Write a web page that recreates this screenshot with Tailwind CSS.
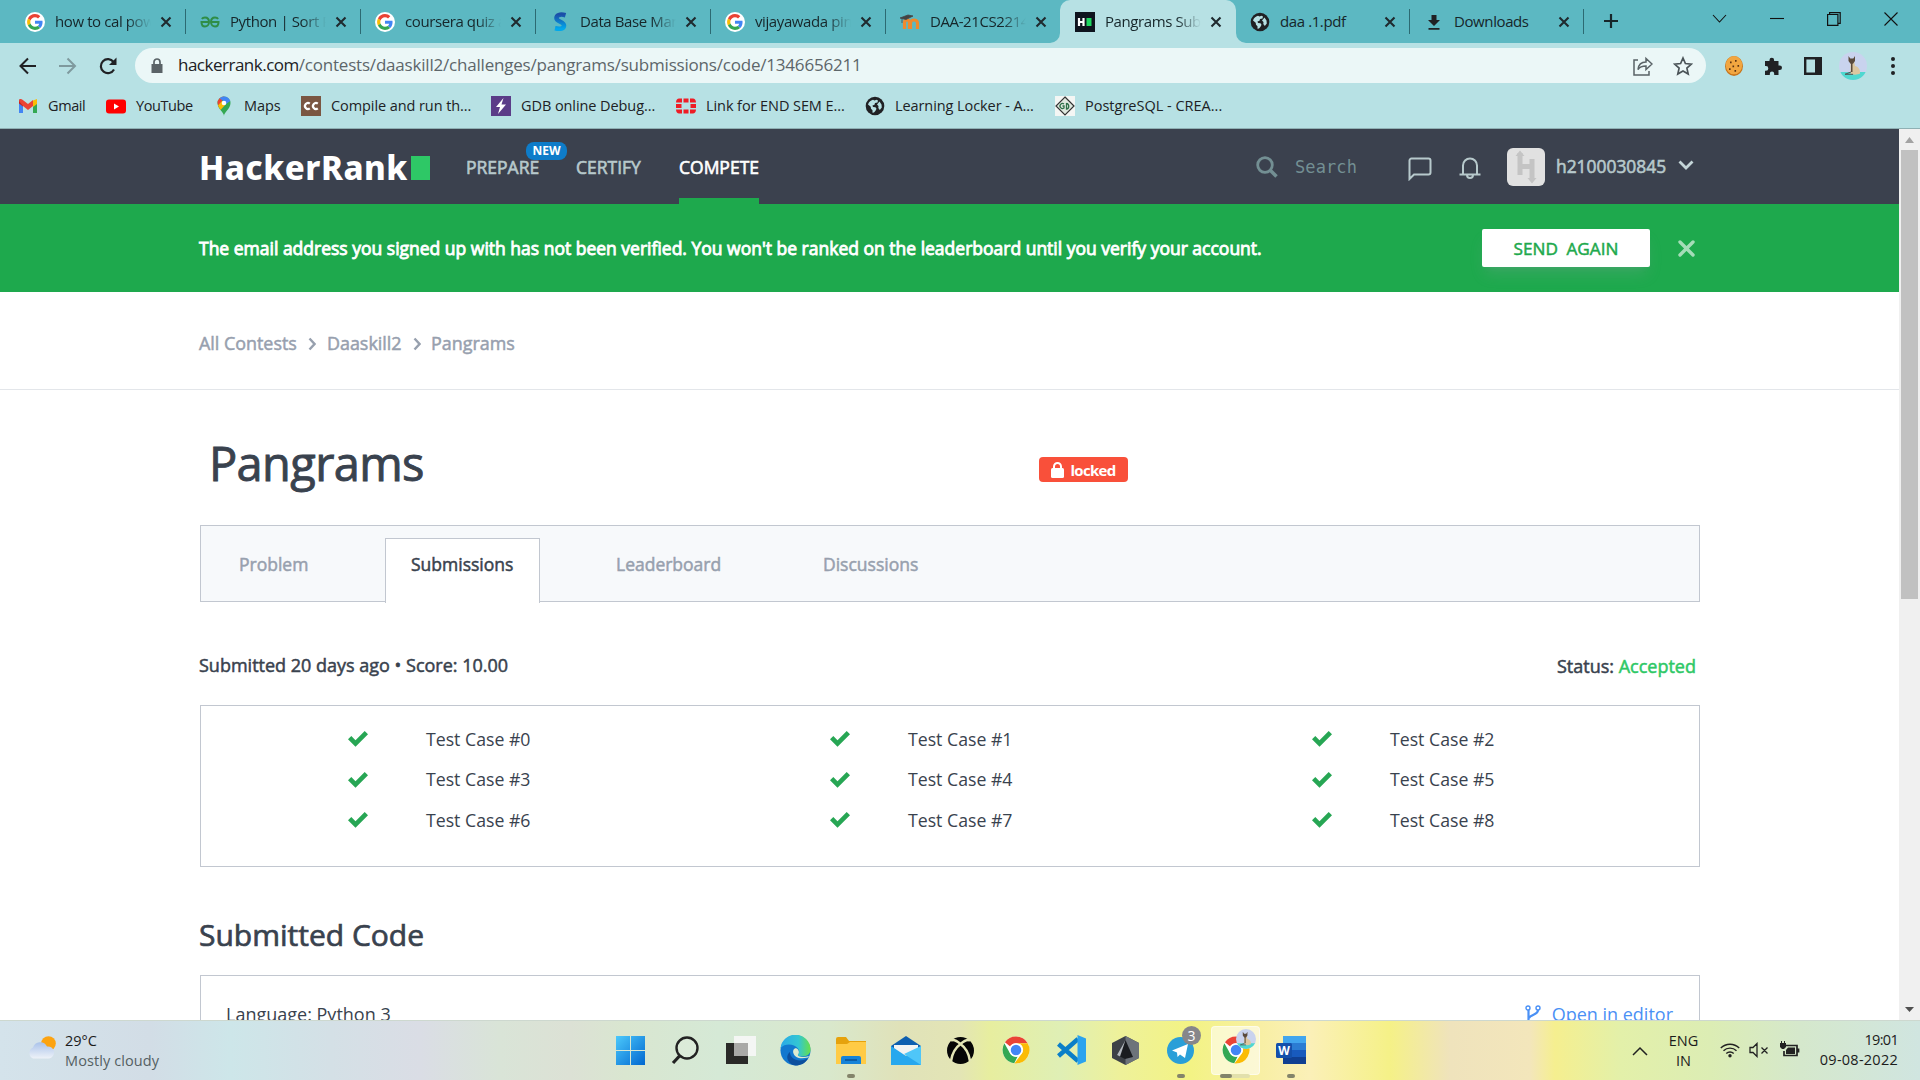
<!DOCTYPE html>
<html lang="en">
<head>
<meta charset="utf-8">
<title>Pangrams Submissions</title>
<script src="https://cdn.jsdelivr.net/npm/@tailwindcss/browser@4"></script>
</head>
<body class="w-[1920px] h-[1080px] overflow-hidden bg-white font-['Open_Sans',sans-serif] text-[#39424e]">
<svg class="absolute size-0">
  <symbol id="google" viewBox="0 0 48 48"><circle cx="24" cy="24" r="24" fill="#fff"/><g transform="translate(5 5) scale(.79)"><path fill="#EA4335" d="M24 9.500c3.540 0 6.710 1.220 9.210 3.600l6.850-6.850C35.900 2.380 30.470 0 24 0 14.620 0 6.510 5.380 2.560 13.220l7.980 6.190C12.430 13.720 17.740 9.500 24 9.500z"/><path fill="#4285F4" d="M46.980 24.550c0-1.570-.15-3.090-.38-4.550H24v9.020h12.940c-.58 2.960-2.260 5.480-4.780 7.180l7.730 6c4.510-4.180 7.090-10.360 7.090-17.650z"/><path fill="#FBBC05" d="M10.530 28.590c-.48-1.450-.76-2.990-.76-4.590s.27-3.140.76-4.590l-7.980-6.190C.92 16.460 0 20.120 0 24s.92 7.540 2.560 10.780l7.970-6.190z"/><path fill="#34A853" d="M24 48c6.480 0 11.930-2.130 15.890-5.810l-7.730-6c-2.150 1.450-4.920 2.300-8.160 2.300-6.260 0-11.570-4.220-13.470-9.910l-7.980 6.190C6.510 42.620 14.620 48 24 48z"/></g></symbol>
  <symbol id="x" viewBox="0 0 12 12"><path d="M1.500 1.500l9 9M10.500 1.500l-9 9" stroke="#1f2a2e" stroke-width="2.100" fill="none"/></symbol>
  <symbol id="globe" viewBox="0 0 20 20"><circle cx="10" cy="10" r="9.300" fill="#202124"/><path d="M3 8.500c.8-2.500 2.500-4 5-4.800l1.500.8 2-.7 1.500.7-.5 2-2.500.5-.5 1.800-2 .7.500 1.500 2.500.2 1 1.500-1 2-1.500 1.800-1.500.2v-2.500l-1.500-1.500-.3-2zM14.500 5.500l2 3 .3 3-2 2.500-1.500-2 .2-2-1.500-1.500z" fill="#b7e1e4"/></symbol>
  <symbol id="chrome" viewBox="0 0 48 48"><circle cx="24" cy="24" r="23" fill="#fff"/><path d="M24 1a23 23 0 0 1 20 11.500H24A11.500 11.500 0 0 0 14 18.200L5 10.900A23 23 0 0 1 24 1z" fill="#ea4335"/><path d="M4.100 12.500L14 29.800A11.500 11.500 0 0 0 24 35.500l2.800-.3L21 46.800A23 23 0 0 1 4.100 12.500z" fill="#34a853"/><path d="M44 12.500A23 23 0 0 1 24 47h-2.700L34 29.800a11.500 11.500 0 0 0-2-15.600l-8-1.700z" fill="#fbbc05"/><circle cx="24" cy="24" r="11.500" fill="#fff"/><circle cx="24" cy="24" r="9" fill="#4285f4"/></symbol>
  <symbol id="check" viewBox="0 0 20 16"><path d="M0 8.300L3.300 5 7.500 9.200 16.700 0 20 3.300 7.500 15.800z" fill="#27a654"/></symbol>
  <symbol id="chev" viewBox="0 0 8 14"><path d="M1.500 1.500L6.500 7l-5 5.500" stroke="#97a0ae" stroke-width="2.400" fill="none"/></symbol>
  <clipPath id="dc"><circle cx="14" cy="14" r="14"/></clipPath>
  <symbol id="dog" viewBox="0 0 28 28"><g clip-path="url(#dc)"><rect width="28" height="28" fill="#c9d3ee"/><path d="M0 20l28 0v8H0z" fill="#4fd8d0"/><path d="M11.500 9c1-1 3-1 3.500 0l1 5c3 .5 5.500 3.500 5 7.500-2 1.500-8 1.500-9.500 0z" fill="#dcc7a0"/><path d="M9.500 4l1.800 2.500h3L16 4v5l-2 2.800h-2.500l-2-2.800zM12 11h1.500v9H12z" fill="#5a4a3c"/><path d="M12 20l-6 2.300h8" stroke="#555" stroke-width="1" fill="none"/></g></symbol>
</svg>

<div class="flex flex-col w-[1920px] h-[1080px]">
  <!-- Tab strip -->
  <div class="flex h-[43px] bg-[#5cb8c2] pl-[11px] text-[15px] tracking-[-0.4px] text-[#16262a] shrink-0">
    <div class="flex items-center w-[175px] pl-[14px] relative"><svg class="size-5"><use href="#google"/></svg><div class="w-[96px] ml-[10px] -mt-px overflow-hidden whitespace-nowrap [mask-image:linear-gradient(to_right,#000_75%,transparent)]"><span>how to cal power</span></div><svg class="size-3 ml-[9px]"><use href="#x"/></svg><i class="absolute right-0 top-[9px] w-px h-[25px] bg-[#2c6a72]"></i></div>
    <div class="flex items-center w-[175px] pl-[14px] relative"><svg class="w-5 h-3" viewBox="0 0 20 12"><path d="M9 6H1.500C1.500 9 3 10.500 5 10.500S9 9 9 6 7.500 1.500 5 1.500 2.500 2 2 3M11 6h7.500c0 3-1.500 4.500-3.500 4.500S11 9 11 6s1.500-4.500 4-4.500 2.500.5 3 1.500" stroke="#2f8d46" stroke-width="2" fill="none"/></svg><div class="w-[96px] ml-[10px] -mt-px overflow-hidden whitespace-nowrap [mask-image:linear-gradient(to_right,#000_75%,transparent)]"><span>Python | Sort Python</span></div><svg class="size-3 ml-[9px]"><use href="#x"/></svg><i class="absolute right-0 top-[9px] w-px h-[25px] bg-[#2c6a72]"></i></div>
    <div class="flex items-center w-[175px] pl-[14px] relative"><svg class="size-5"><use href="#google"/></svg><div class="w-[96px] ml-[10px] -mt-px overflow-hidden whitespace-nowrap [mask-image:linear-gradient(to_right,#000_75%,transparent)]"><span>coursera quiz answers</span></div><svg class="size-3 ml-[9px]"><use href="#x"/></svg><i class="absolute right-0 top-[9px] w-px h-[25px] bg-[#2c6a72]"></i></div>
    <div class="flex items-center w-[175px] pl-[14px] relative"><svg class="size-5" viewBox="0 0 20 20"><defs><linearGradient id="sg" x2="0" y2="1"><stop stop-color="#1b4fa8"/><stop offset="1" stop-color="#00a8ec"/></linearGradient></defs><path d="M15.500 3.200C9.500 1.500 6.500 3.500 6.500 6c0 4 7.500 3.500 7.500 7.500 0 3-3.500 4-9 2.800" stroke="url(#sg)" stroke-width="4.600" fill="none"/></svg><div class="w-[96px] ml-[10px] -mt-px overflow-hidden whitespace-nowrap [mask-image:linear-gradient(to_right,#000_75%,transparent)]"><span>Data Base Management</span></div><svg class="size-3 ml-[9px]"><use href="#x"/></svg><i class="absolute right-0 top-[9px] w-px h-[25px] bg-[#2c6a72]"></i></div>
    <div class="flex items-center w-[175px] pl-[14px] relative"><svg class="size-5"><use href="#google"/></svg><div class="w-[96px] ml-[10px] -mt-px overflow-hidden whitespace-nowrap [mask-image:linear-gradient(to_right,#000_75%,transparent)]"><span>vijayawada pincode</span></div><svg class="size-3 ml-[9px]"><use href="#x"/></svg><i class="absolute right-0 top-[9px] w-px h-[25px] bg-[#2c6a72]"></i></div>
    <div class="flex items-center w-[174px] pl-[14px]"><svg class="size-5" viewBox="0 0 20 20"><path d="M4.500 17v-6c0-4 5-4 5 0v6M10.500 17v-6c0-4 7-4 7 0v6" stroke="#f08a2c" stroke-width="3.200" fill="none"/><path d="M0 6l8-3 5 1-7 3.500zM2 6v5" fill="#444" stroke="#444" stroke-width=".8"/></svg><div class="w-[96px] ml-[10px] -mt-px overflow-hidden whitespace-nowrap [mask-image:linear-gradient(to_right,#000_75%,transparent)]"><span>DAA-21CS2214</span></div><svg class="size-3 ml-[9px]"><use href="#x"/></svg></div>
    <div class="flex items-center w-[176px] pl-[15px] bg-[#b7e1e4] rounded-t-[10px] relative"><svg class="absolute -left-[10px] bottom-0 size-[10px]" viewBox="0 0 10 10"><path d="M10 0v10H0A10 10 0 0 0 10 0z" fill="#b7e1e4"/></svg><svg class="absolute -right-[10px] bottom-0 size-[10px]" viewBox="0 0 10 10"><path d="M0 0v10h10A10 10 0 0 1 0 0z" fill="#b7e1e4"/></svg>
      <svg class="size-5" viewBox="0 0 20 20"><path fill="#0e141e" d="M0 0h20v20H0z"/><path d="M4 6v8M8.500 6v8M4 10h4.500" stroke="#fff" stroke-width="2.200"/><path fill="#1ed760" d="M11.500 6h5v8h-5z"/></svg><div class="w-[96px] ml-[10px] -mt-px overflow-hidden whitespace-nowrap [mask-image:linear-gradient(to_right,#000_75%,transparent)]"><span>Pangrams Submissions</span></div><svg class="size-3 ml-[9px]"><use href="#x"/></svg></div>
    <div class="flex items-center w-[174px] pl-[14px] relative"><svg class="size-5"><use href="#globe"/></svg><div class="w-[96px] ml-[10px] -mt-px"><span>daa .1.pdf</span></div><svg class="size-3 ml-[8px]"><use href="#x"/></svg><i class="absolute right-0 top-[9px] w-px h-[25px] bg-[#2c6a72]"></i></div>
    <div class="flex items-center w-[174px] pl-[14px] relative"><svg class="size-5" viewBox="0 0 20 20"><path d="M7.500 3h5v5h3.500l-6 6-6-6h3.500zM4.500 16h11v1.800h-11z" fill="#202124"/></svg><div class="w-[96px] ml-[10px] -mt-px"><span>Downloads</span></div><svg class="size-3 ml-[8px]"><use href="#x"/></svg><i class="absolute right-0 top-[9px] w-px h-[25px] bg-[#2c6a72]"></i></div>
    <svg class="w-4 h-4 mt-[13px] ml-[19px]" viewBox="0 0 16 16"><path d="M8 1v14M1 8h14" stroke="#16262a" stroke-width="2.200"/></svg>
    <div class="flex ml-auto pr-[22px] pt-[12px] gap-[43px]">
      <svg class="w-[15px] h-[14px]" viewBox="0 0 15 14"><path d="M1 3l6.500 7L14 3" stroke="#111" stroke-width="1.100" fill="none"/></svg>
      <svg class="w-[14px] h-[14px]" viewBox="0 0 14 14"><path d="M0 6.500h14" stroke="#111" stroke-width="1.100"/></svg>
      <svg class="w-[14px] h-[14px]" viewBox="0 0 14 14"><path d="M.6 2.500h10.300v10.800H.6zM2.600 2.500V.6h10.600v10.800h-2" stroke="#111" stroke-width="1.200" fill="none"/></svg>
      <svg class="w-[14px] h-[14px]" viewBox="0 0 14 14"><path d="M.5 .5l13 13M13.500 .5l-13 13" stroke="#111" stroke-width="1.100"/></svg>
    </div>
  </div>

  <!-- Address bar -->
  <div class="flex h-[45px] items-center bg-[#b7e1e4] shrink-0 pl-[18px] pr-[25px] pb-px pt-px">
    <svg class="w-5 h-5" viewBox="0 0 20 20"><path d="M18 10H3M10 2.500L2.500 10l7.500 7.500" stroke="#202124" stroke-width="2" fill="none"/></svg>
    <svg class="w-5 h-5 ml-[20px]" viewBox="0 0 20 20"><path d="M1 10h15M9.500 2.500L17 10l-7.500 7.500" stroke="#7f9a9e" stroke-width="2" fill="none"/></svg>
    <svg class="w-5 h-5 ml-[20px]" viewBox="0 0 20 20"><path d="M16 13.500a7 7 0 1 1-.5-7.500" stroke="#202124" stroke-width="2.200" fill="none"/><path d="M18.500 1.500v7.500H11z" fill="#202124"/></svg>
    <div class="flex flex-1 ml-[17px] h-[35px] rounded-full bg-[#ebf7f7] items-center pl-[16px] pr-[13px]">
      <svg class="w-3 h-4" viewBox="0 0 12 16"><path d="M.5 6h11v9H.5z" fill="#5a6367"/><path d="M3 7V4a3 3 0 0 1 6 0v3" stroke="#5a6367" stroke-width="1.700" fill="none"/></svg>
      <div class="ml-[15px] -mt-px text-[17px] whitespace-nowrap text-[#5d666a]"><span class="text-[#202124] tracking-[-0.5px]">hackerrank.com</span><span class="tracking-[-0.2px]">/contests/daaskill2/challenges/pangrams/submissions/code/1346656211</span></div>
      <svg class="w-5 h-5 ml-auto" viewBox="0 0 20 20"><path d="M5 4H1v15h15v-4" stroke="#5a6367" stroke-width="1.500" fill="none"/><path d="M5 13.500c.5-5 3-7.500 8-7.500V2.500l6 5.500-6 5.500V10c-4 0-6.500 1-8 3.500z" stroke="#5a6367" stroke-width="1.500" fill="none"/></svg>
      <svg class="w-5 h-5 ml-[20px]" viewBox="0 0 20 20"><path d="M10 2l2.400 5.500 6 .6-4.500 4 1.300 5.900L10 15l-5.200 3 1.300-5.900-4.500-4 6-.6z" stroke="#4b5458" stroke-width="1.700" fill="none"/></svg>
    </div>
    <svg class="w-[18px] h-[20px] ml-[19px]" viewBox="0 0 18 18" preserveAspectRatio="none"><circle cx="9" cy="9" r="9" fill="#c8741a"/><circle cx="9" cy="8.300" r="8.200" fill="#f2a640"/><path d="M5 5h1.600v1.600H5zM10 3.500h1.600v1.600H10zM12.500 8h1.600v1.600h-1.600zM7.500 8.500h1.600v1.600H7.500zM4 11h1.600v1.600H4zM9.500 12.500h1.600v1.600H9.500z" fill="#5b3210"/></svg>
    <svg class="w-5 h-5 ml-[20px]" viewBox="0 0 20 20"><path d="M2 5h4.500V4a2.300 2.300 0 0 1 4.600 0v1h4.400v4.500h1.200a2.300 2.300 0 0 1 0 4.600h-1.200V19h-4.300v-1.300a2 2 0 0 0-4.400 0V19H2v-4.300h1a2.300 2.300 0 0 0 0-4.600H2z" fill="#202124"/></svg>
    <svg class="w-[18px] h-[18px] ml-[21px]" viewBox="0 0 18 18"><path d="M1.200 1.200h15.600v15.600H1.200z" fill="none" stroke="#202124" stroke-width="2.400"/><path d="M11 1h6v16h-6z" fill="#202124"/></svg>
    <svg class="w-7 h-7 ml-[17px]"><use href="#dog"/></svg>
    <svg class="w-1 h-5 ml-[24px]" viewBox="0 0 4 20"><circle cx="2" cy="3" r="2" fill="#202124"/><circle cx="2" cy="10" r="2" fill="#202124"/><circle cx="2" cy="17" r="2" fill="#202124"/></svg>
  </div>

  <!-- Bookmarks -->
  <div class="flex h-[41px] pb-[5px] items-center bg-[#b7e1e4] border-b border-[#8fb0b4] shrink-0 pl-[18px] text-[14.500px] tracking-[-0.08px] text-[#202124] whitespace-nowrap">
    <div class="flex items-center gap-[10px] w-[88px]"><svg class="size-5 shrink-0" viewBox="0 0 20 20"><path d="M1 4.500v12.500h4V9z" fill="#4285f4"/><path d="M19 4.500v12.500h-4V9z" fill="#34a853"/><path d="M15 4.500L19 3v5l-4 3z" fill="#fbbc04"/><path d="M1 3.500L5 4.500v6L1 7.500z" fill="#c5221f"/><path d="M1 5C1 3 3 2.500 4.500 3.700L10 8l5-4v6l-5 4-5-4z" fill="#ea4335"/></svg><span class="tracking-[-0.4px]">Gmail</span></div>
    <div class="flex items-center gap-[10px] w-[108px]"><svg class="size-5 shrink-0" viewBox="0 0 20 20"><rect y="3.500" width="20" height="14" rx="3" fill="#f00"/><path d="M8 7.500v6l5-3z" fill="#fff"/></svg><span class="tracking-[-0.4px]">YouTube</span></div>
    <div class="flex items-center gap-[10px] w-[87px]"><svg class="size-5 shrink-0" viewBox="0 0 20 20"><path d="M10 20c0-4-6.500-7-6.500-13a6.500 6.500 0 0 1 13 0c0 6-6.500 9-6.500 13z" fill="#34a853"/><path d="M3.500 7A6.500 6.500 0 0 1 10 .5L5 11z" fill="#ea4335"/><path d="M10 .5c3 0 5.500 2 6.300 4.500L12 8 8 4 5.500 2.500A7 7 0 0 1 10 .5z" fill="#4285f4"/><path d="M4 9.500L8 5l4 3-5.500 6z" fill="#fbbc04"/><circle cx="10" cy="7" r="2.300" fill="#fff"/></svg><span>Maps</span></div>
    <div class="flex items-center gap-[10px] w-[190px]"><svg class="size-5 shrink-0" viewBox="0 0 20 20"><path d="M0 0h20v20H0z" fill="#7a5642"/><path d="M8.800 7.600a3 3 0 1 0 0 4.800M16.800 7.600a3 3 0 1 0 0 4.800" stroke="#fff" stroke-width="2.200" fill="none"/></svg><span>Compile and run th...</span></div>
    <div class="flex items-center gap-[10px] w-[185px]"><svg class="size-5 shrink-0" viewBox="0 0 20 20"><path d="M0 0h20v20H0z" fill="#5b3c88"/><path d="M12.500 2L5 11h4l-2 7 8-9.500h-4.500z" fill="#fff"/></svg><span>GDB online Debug...</span></div>
    <div class="flex items-center gap-[10px] w-[189px]"><svg class="size-5 shrink-0" viewBox="0 0 20 20"><path d="M7.500 2.500h5v4h-5zM7.500 13.500h5v4h-5zM0 8h5.500v4H0zM14.500 8H20v4h-5.500zM3 2.500h3v4H0C0 4 1.500 2.500 3 2.500zM17 2.500h-3v4h6c0-2.500-1.500-4-3-4zM3 17.500h3v-4H0c0 2.500 1.500 4 3 4zM17 17.500h-3v-4h6c0 2.500-1.500 4-3 4z" fill="#ee1c25"/></svg><span>Link for END SEM E...</span></div>
    <div class="flex items-center gap-[10px] w-[190px]"><svg class="size-5 shrink-0"><use href="#globe"/></svg><span>Learning Locker - A...</span></div>
    <div class="flex items-center gap-[10px]"><svg class="size-5 shrink-0" viewBox="0 0 20 20"><path d="M0 0h20v20H0z" fill="#f4f6f4"/><path d="M10 1l9 9-9 9-9-9z" fill="#dfe8df" stroke="#333" stroke-width="1.200"/><path d="M9 8a2.500 2.500 0 1 0 0 4V10H7.500M11.500 7v6c3 0 3-5.500 0-5.500" stroke="#2f7048" stroke-width="1.300" fill="none"/></svg><span class="tracking-normal">PostgreSQL - CREA...</span></div>
  </div>

  <!-- Viewport -->
  <div class="flex h-[891px] shrink-0 overflow-hidden">
    <div class="w-[1899px] h-full overflow-hidden">
      <!-- Site header -->
      <div class="flex h-[75px] bg-[#3b414e] pl-[199px] pr-[205px]">
        <div class="flex items-center w-[267px] pt-[3px]"><span class="font-['Noto_Sans',sans-serif] font-extrabold text-[33px] tracking-[0.5px] leading-none text-white whitespace-nowrap -mt-[2px]">HackerRank</span><i class="w-[19px] h-6 ml-[3px] bg-[#2ec866]"></i></div>
        <div class="flex gap-[36px] text-[17.500px] [-webkit-text-stroke:0.6px] text-[#b7c9cc]">
          <div class="relative h-full pt-[26px] leading-6 w-[74px] whitespace-nowrap"><span>PREPARE</span><b class="absolute left-[60px] top-[13px] w-[41px] h-[18px] rounded-lg bg-[#0e7cc9] text-white text-[12px] leading-[18px] text-center [-webkit-text-stroke:0px]">NEW</b></div>
          <div class="h-full pt-[26px] leading-6 w-[67px]"><span>CERTIFY</span></div>
          <div class="h-full pt-[26px] leading-6 w-[80px] text-white border-b-[6px] border-[#1ea94d] whitespace-nowrap"><span>COMPETE</span></div>
        </div>
        <div class="flex ml-auto items-center">
          <svg class="w-[22px] h-[22px]" viewBox="0 0 22 22"><circle cx="9" cy="9" r="7.300" stroke="#738f93" stroke-width="2.800" fill="none"/><path d="M14 14l6.500 6.500" stroke="#738f93" stroke-width="3.600"/></svg>
          <span class="ml-[17px] w-[63px] pt-0.5 font-['DejaVu_Sans_Mono',monospace] text-[17px] tracking-[0.1px] text-[#738f93]">Search</span>
          <svg class="w-6 h-6 ml-[50px] mt-[4px]" viewBox="0 0 24 24"><path d="M1.500 22V3.500A2 2 0 0 1 3.500 1.500h17a2 2 0 0 1 2 2v12a2 2 0 0 1-2 2H6z" stroke="#b7c9cc" stroke-width="2" fill="none"/></svg>
          <svg class="w-6 h-6 ml-[26px] mt-[3px]" viewBox="0 0 24 24"><path d="M1.500 18.500h21M5 18V9.500a7 7 0 0 1 14 0V18M9 19a3 3 0 0 0 6 0" stroke="#b7c9cc" stroke-width="2" fill="none"/></svg>
          <svg class="w-[38px] h-[38px] ml-[25px]" viewBox="0 0 38 38"><rect width="38" height="38" rx="6" fill="#e1e1e1"/><path d="M13 5v22M13 18.500h13M25 11v21" stroke="#c4c4c4" stroke-width="5"/><path d="M8.500 8L13 2.500 17.500 8zM20.500 30h9L25 35.500z" fill="#c4c4c4"/></svg>
          <span class="ml-[11px] w-[110px] -mt-px [-webkit-text-stroke:0.6px] text-[17.400px] text-[#b7c9cc]">h2100030845</span>
          <svg class="w-4 h-[10px] ml-[12px] -mt-1" viewBox="0 0 16 10"><path d="M1.500 1.500L8 8l6.500-6.500" stroke="#c5d6d9" stroke-width="2.800" fill="none"/></svg>
        </div>
      </div>
      <!-- Verification banner -->
      <div class="flex items-center h-[88px] bg-[#1ea94d] pl-[199px] pr-[204px]">
        <span class="[-webkit-text-stroke:0.85px] text-[17.500px] text-white whitespace-nowrap pt-px">The email address you signed up with has not been verified. You won't be ranked on the leaderboard until you verify your account.</span>
        <div class="flex items-center justify-center ml-auto w-[168px] h-[38px] rounded-[2px] bg-white text-[#1ea94d] [-webkit-text-stroke:0.5px] text-[17.200px] [word-spacing:4px] pt-0.5 shadow-lg shadow-gray-400/20"><span>SEND AGAIN</span></div>
        <svg class="w-[17px] h-[17px] ml-[28px]" viewBox="0 0 17 17"><path d="M2 2l13 13M15 2L2 15" stroke="#a5ddb8" stroke-width="3.400" stroke-linecap="round"/></svg>
      </div>
      <!-- Breadcrumb -->
      <div class="flex items-center h-[98px] border-b border-[#e3e6ea] pl-[199px] pt-[6px] text-[#97a0ae] [-webkit-text-stroke:0.5px] text-[17.900px]">
        <span class="w-[98px] whitespace-nowrap">All Contests</span><svg class="w-2 h-3.5 mx-[11px]"><use href="#chev"/></svg><span class="w-[75px]">Daaskill2</span><svg class="w-2 h-3.5 ml-[11px] mr-[10px]"><use href="#chev"/></svg><span>Pangrams</span>
      </div>
      <!-- Content -->
      <div class="pl-[200px] w-[1700px]">
        <div class="flex h-[135px]">
          <h1 class="ml-[9px] mt-[41px] w-[830px] text-[47px] tracking-[-0.65px] leading-[64px] [-webkit-text-stroke:0.9px]">Pangrams</h1>
          <div class="flex items-center justify-center gap-[6px] w-[89px] h-[25px] mt-[67px] pt-px rounded bg-[#f9503a] text-white text-[15px] tracking-[-0.7px] font-bold"><svg class="w-[13px] h-4" viewBox="0 0 13 16"><rect y="6" width="13" height="10" rx="1.500" fill="#fff"/><path d="M3 7V4.500a3.500 3.500 0 0 1 7 0V7" stroke="#fff" stroke-width="2" fill="none"/></svg><span>locked</span></div>
        </div>
        <div class="flex h-[77px] w-[1500px] border border-[#c2c7d0] bg-[#f7f9fb] text-[17.500px] [-webkit-text-stroke:0.5px] text-[#97a0ae]">
          <div class="w-[184px] pl-[38px] pt-[26px] leading-6"><span>Problem</span></div>
          <div class="w-[155px] h-[65px] mt-[12px] bg-white border border-b-0 border-[#c2c7d0] text-[#39424e] pl-[25px] pt-[13px] leading-6"><span>Submissions</span></div>
          <div class="w-[207px] pl-[76px] pt-[26px] leading-6"><span>Leaderboard</span></div>
          <div class="pl-[76px] pt-[26px] leading-6"><span>Discussions</span></div>
        </div>
        <div class="flex justify-between items-center h-[103px] w-[1500px] pr-[4px] pt-[24px] text-[18px] [-webkit-text-stroke:0.5px]">
          <span class="-ml-px">Submitted 20 days ago • Score: 10.00</span>
          <span class="mt-[2px]">Status: <span class="text-[#2ec866]">Accepted</span></span>
        </div>
        <div class="grid grid-cols-[482px_482px_auto] auto-rows-[40.500px] content-start h-[162px] w-[1500px] border border-[#c2c7d0] pl-[147px] pt-[13px] text-[17.700px]">
          <div class="flex items-center gap-[58px]"><svg class="w-5 h-4"><use href="#check"/></svg><span>Test Case #0</span></div>
          <div class="flex items-center gap-[58px]"><svg class="w-5 h-4"><use href="#check"/></svg><span>Test Case #1</span></div>
          <div class="flex items-center gap-[58px]"><svg class="w-5 h-4"><use href="#check"/></svg><span>Test Case #2</span></div>
          <div class="flex items-center gap-[58px]"><svg class="w-5 h-4"><use href="#check"/></svg><span>Test Case #3</span></div>
          <div class="flex items-center gap-[58px]"><svg class="w-5 h-4"><use href="#check"/></svg><span>Test Case #4</span></div>
          <div class="flex items-center gap-[58px]"><svg class="w-5 h-4"><use href="#check"/></svg><span>Test Case #5</span></div>
          <div class="flex items-center gap-[58px]"><svg class="w-5 h-4"><use href="#check"/></svg><span>Test Case #6</span></div>
          <div class="flex items-center gap-[58px]"><svg class="w-5 h-4"><use href="#check"/></svg><span>Test Case #7</span></div>
          <div class="flex items-center gap-[58px]"><svg class="w-5 h-4"><use href="#check"/></svg><span>Test Case #8</span></div>
        </div>
        <h2 class="h-[108px] pt-[47px] leading-[42px] text-[30px] [-webkit-text-stroke:0.7px] -ml-px">Submitted Code</h2>
        <div class="flex justify-between w-[1500px] h-[120px] border border-[#c2c7d0] pl-[25px] pr-[26px] pt-[25px] text-[18px]">
          <span class="h-6">Language: Python 3</span>
          <div class="flex gap-[11px] h-6 text-[#4a90f5]"><svg class="w-4 h-5 mt-[4px]" viewBox="0 0 16 20"><circle cx="3" cy="3" r="2" stroke="#4a90f5" stroke-width="1.400" fill="none"/><circle cx="13" cy="3" r="2" stroke="#4a90f5" stroke-width="1.400" fill="none"/><path d="M3.500 5v12M13 5c0 5-7 4-9 8" stroke="#4a90f5" stroke-width="2.200" fill="none"/></svg><span>Open in editor</span></div>
        </div>
      </div>
    </div>
    <!-- Scrollbar -->
    <div class="flex flex-col items-center w-[21px] h-full bg-[#f0f0f0]">
      <svg class="w-[9px] h-[6px] mt-[8px]" viewBox="0 0 9 6"><path d="M4.500 0L9 6H0z" fill="#a3a3a3"/></svg>
      <div class="w-[17px] h-[449px] mt-[7px] bg-[#c1c1c1]"></div>
      <svg class="w-[9px] h-[6px] mt-auto mb-[7px]" viewBox="0 0 9 6"><path d="M4.500 5L9 0H0z" fill="#505050"/></svg>
    </div>
  </div>

  <!-- Taskbar -->
  <div class="relative flex h-[60px] shrink-0 border-t border-[#cdd8cf] bg-[linear-gradient(90deg,#d4e3eb_0px,#d2dde6_150px,#cde6e9_230px,#d4e0e6_330px,#dadde5_420px,#d9e4d7_500px,#dce1d5_570px,#d9e6d0_625px,#d5e9d6_720px,#d9e8cc_830px,#e0e2b9_900px,#e3e5b5_960px,#e7ee9f_990px,#dfefb5_1060px,#eef19a_1120px,#f3f384_1190px,#f8efa4_1260px,#fbf0b8_1310px,#f5f187_1390px,#efe3bc_1450px,#f3e6bb_1530px,#f5ef8f_1555px,#e3f0a9_1620px,#dcedb4_1710px,#d5e8cc_1800px,#d0e5e0_1920px)] text-[#1c1c1c]">
    <svg class="w-[30px] h-6 mt-[15px] ml-[27px]" viewBox="0 0 30 24"><defs><linearGradient id="cl" x2="0" y2="1"><stop stop-color="#a9c2ea"/><stop offset="1" stop-color="#eef2f8"/></linearGradient></defs><circle cx="21.500" cy="7.500" r="7.300" fill="#fca311"/><path d="M6 22.500a6 6 0 0 1 0-11 7.500 7.500 0 0 1 14-1 6 6 0 0 1 2 12z" fill="url(#cl)"/></svg>
    <div class="flex flex-col ml-[8px] pt-[10px] text-[14.500px] leading-[20px] w-[110px] whitespace-nowrap"><span>29°C</span><span class="text-[#555f63] tracking-[0.1px]">Mostly cloudy</span></div>
    <div class="flex ml-[428px] pt-[1px]">
      <div class="flex w-[55px] h-[56px] items-center justify-center"><svg class="w-[29px] h-[29px]" viewBox="0 0 29 29"><defs><linearGradient id="wn" x2="1" y2="1"><stop stop-color="#4cc9fb"/><stop offset="1" stop-color="#0067d0"/></linearGradient></defs><path d="M0 0h14v14H0zM15 0h14v14H15zM0 15h14v14H0zM15 15h14v14H15z" fill="url(#wn)"/></svg></div>
      <div class="flex w-[55px] h-[56px] items-center justify-center"><svg class="w-[29px] h-[29px]" viewBox="0 0 29 29"><circle cx="16" cy="12" r="10.500" stroke="#222" stroke-width="2.400" fill="#ffffff22"/><path d="M8.500 20L2 27" stroke="#222" stroke-width="3.200"/></svg></div>
      <div class="flex w-[55px] h-[56px] items-center justify-center"><svg class="w-[30px] h-[29px]" viewBox="0 0 30 29"><path d="M0 7h22v21H0z" fill="#2a2a28"/><path d="M8 0h22v20H8z" fill="#f6f6f6" fill-opacity=".92"/><path d="M8 7h14v13H8z" fill="#a9a9a7"/></svg></div>
      <div class="flex w-[55px] h-[56px] items-center justify-center"><svg class="w-[31px] h-[31px]" viewBox="0 0 31 31"><defs><linearGradient id="eg"><stop stop-color="#2aa9e8"/><stop offset=".6" stop-color="#33c6d3"/><stop offset="1" stop-color="#66e04a"/></linearGradient></defs><circle cx="15.500" cy="15.500" r="15" fill="#1278cf"/><path d="M.6 13A15 15 0 0 1 30.500 14c.3 5-3.500 7.500-8 7.500-3 0-5-.8-4.500-2 1.500-2 1.500-4 0-6C14 8.500 5 8 .6 13z" fill="url(#eg)"/><path d="M10 17c0 7 8 11 18 6.500-3 5-7.500 7-12 7C8 30 4.500 21 10 17z" fill="#0c4f9e"/><path d="M18 14.500c-2.500-3-6 0-4.500 4s6 6 14.500 4l1-1.500c-6 2-12 .5-11-1.500 1.500-1.500 1-3.500 0-5z" fill="#dcebd0"/></svg></div>
      <div class="relative flex w-[55px] h-[56px] items-center justify-center"><svg class="w-[30px] h-[27px]" viewBox="0 0 30 27"><path d="M0 2a2 2 0 0 1 2-2h8l3 4h17v6H0z" fill="#e6a20c"/><path d="M0 7h11l3-2h16v22H0z" fill="#ffcb45"/><path d="M5 27v-6a2 2 0 0 1 2-2h16a2 2 0 0 1 2 2v6z" fill="#1683d8"/><path d="M9 23h12" stroke="#0a4f94" stroke-width="1.500"/></svg><i class="absolute bottom-0 left-[24px] w-2 h-1 rounded-full bg-[#83846a]"></i></div>
      <div class="flex w-[55px] h-[56px] items-center justify-center"><svg class="w-[30px] h-[29px]" viewBox="0 0 30 29"><path d="M0 10L15 0l15 10v8H0z" fill="#0e5fb0"/><path d="M3 9h24v10H3z" fill="#f3f3f3"/><path d="M0 10l15 10L30 10v19H0z" fill="#27a8ee"/><path d="M30 10v19L13 18z" fill="#4fc6f8"/></svg></div>
      <div class="flex w-[55px] h-[56px] items-center justify-center"><svg class="w-[27px] h-[27px]" viewBox="0 0 27 27"><circle cx="13.500" cy="13.500" r="13.500" fill="#060606"/><path d="M4 3.500c3-1.500 6 .5 9.500 3.500C17 4 20 2 23 3.500M13.500 7C8 11 5 17 4 24M13.500 7C19 11 22 17 23 24" stroke="#e3e5b5" stroke-width="2.600" fill="none"/></svg></div>
      <div class="flex w-[55px] h-[56px] items-center justify-center"><svg class="size-7"><use href="#chrome"/></svg></div>
      <div class="flex w-[55px] h-[56px] items-center justify-center"><svg class="w-[30px] h-[30px]" viewBox="0 0 30 30"><path d="M2.500 9L22 26M2.500 21L22 4" stroke="#0a7fc8" stroke-width="4.500"/><path d="M21.500 0L30 3.500v23L21.500 30z" fill="#2aa3ee"/></svg></div>
      <div class="flex w-[55px] h-[56px] items-center justify-center"><svg class="w-[27px] h-[29px]" viewBox="0 0 27 29"><path d="M13.500 0L27 7v15l-13.500 7L0 22V7z" fill="#3d4147"/><path d="M13.500 0L27 7v15l-13.500 7z" fill="#6d737a"/><path d="M13.500 4L21 21l-8 2-8-4z" fill="#1a1c20"/><path d="M13.500 4L5 19l3 1.500z" fill="#b5bac0"/></svg></div>
      <div class="relative flex w-[55px] h-[56px] items-center justify-center"><svg class="w-[27px] h-[27px]" viewBox="0 0 27 27"><circle cx="13.500" cy="13.500" r="13.500" fill="#2a9fd8"/><path d="M5 13.500L21 7l-3 14-5-3.500-2.500 2.500-.5-4.500z" fill="#fff"/></svg><b class="absolute left-[29px] top-[4px] size-[19px] rounded-full bg-[#86868a] text-white text-[14px] font-normal leading-[19px] text-center">3</b><i class="absolute bottom-0 left-[24px] w-2 h-1 rounded-full bg-[#83846a]"></i></div>
      <div class="relative flex w-[55px] h-[56px] items-center justify-center"><div class="absolute inset-x-[3px] top-[4px] h-[49px] rounded bg-white/55 border border-white/50"></div><svg class="relative size-7"><use href="#chrome"/></svg><svg class="absolute left-[28px] top-[7px] size-5"><use href="#dog"/></svg><i class="absolute bottom-0 left-[12px] w-[30px] h-1 rounded-full bg-[#e2e0ac]"></i><i class="absolute bottom-0 left-[12px] w-3 h-1 rounded-full bg-[#83846a]"></i></div>
      <div class="relative flex w-[55px] h-[56px] items-center justify-center"><svg class="w-[30px] h-[28px]" viewBox="0 0 30 28"><path d="M7 0h23v7H7z" fill="#41a5ee"/><path d="M7 7h23v7H7z" fill="#2b7cd3"/><path d="M7 14h23v7H7z" fill="#185abd"/><path d="M7 21h23v7H7z" fill="#103f91"/><rect y="7" width="16" height="15" rx="1.500" fill="#1450ab"/><text x="8" y="19" font-size="12" font-weight="700" fill="#fff" text-anchor="middle">W</text></svg><i class="absolute bottom-0 left-[24px] w-2 h-1 rounded-full bg-[#83846a]"></i></div>
    </div>
    <div class="flex ml-auto pr-[22px] text-[14.500px] leading-[20px]">
      <svg class="w-4 h-[10px] mt-[25px]" viewBox="0 0 16 10"><path d="M1 9l7-7 7 7" stroke="#222" stroke-width="1.500" fill="none"/></svg>
      <div class="flex flex-col items-center w-[31px] ml-[20px] pt-[10px]"><span>ENG</span><span>IN</span></div>
      <svg class="w-5 h-4 mt-[21px] ml-[21px]" viewBox="0 0 20 16"><path d="M.8 6a13 13 0 0 1 18.400 0M3.500 8.800a9.200 9.200 0 0 1 13 0M6.300 11.500a5.300 5.300 0 0 1 7.400 0" stroke="#222" stroke-width="1.400" fill="none"/><circle cx="10" cy="13.700" r="1.700" fill="#222"/></svg>
      <svg class="w-5 h-4 mt-[21px] ml-[9px]" viewBox="0 0 20 16"><path d="M1 5.500h3l4-4v13l-4-4H1zM12.500 5.500l6 6M18.500 5.500l-6 6" stroke="#222" stroke-width="1.300" fill="none"/></svg>
      <svg class="w-5 h-4 mt-[20px] ml-[11px]" viewBox="0 0 20 16"><path d="M6 4.500h11v10H4V10M18.500 7.500v4" stroke="#222" stroke-width="1.700" fill="none"/><path d="M8 6.500h7v6.500H6V9zM0 2h6v4L4 8H2L0 6zM1 0h1v2H1zM4 0h1v2H4z" fill="#222"/></svg>
      <div class="flex flex-col items-end w-[98px] pt-[9px]"><span class="tracking-[-0.7px]">19:01</span><span class="tracking-[0.25px]">09-08-2022</span></div>
    </div>
  </div>
</div>
</body>
</html>
